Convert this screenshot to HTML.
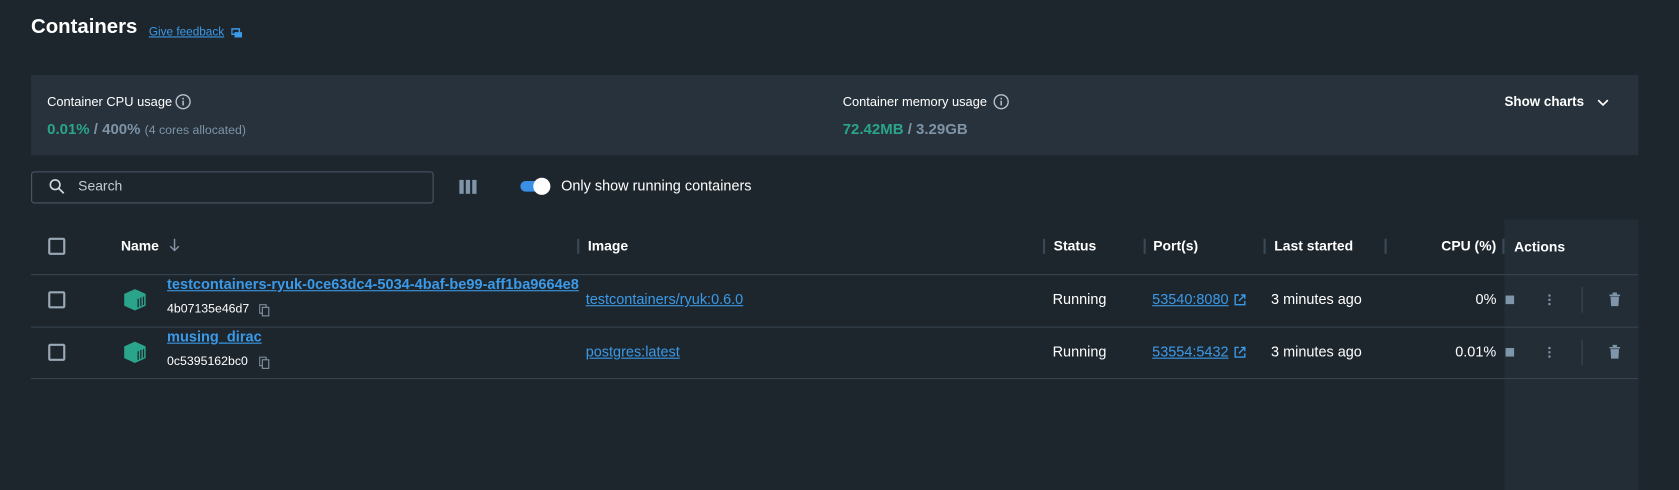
<!DOCTYPE html>
<html><head><style>
*{box-sizing:border-box;margin:0;padding:0}
body{width:1679px;height:458px;background:#1e262d;font-family:"Liberation Sans",Arial,sans-serif;color:#fff;position:relative;overflow:hidden}
#w{position:absolute;left:0;top:0;width:1568px;height:428px;transform:scale(1.0708);transform-origin:0 0}
.a{position:absolute;white-space:nowrap}
.lnk{color:#3b9ae8;text-decoration:underline}
.h{font-weight:bold;font-size:13px;top:222px}
.sep{position:absolute;width:2px;height:14px;background:#3b4956;top:223px}
.cb{position:absolute;width:16px;height:16px;border:2px solid #9aa9b6;border-radius:2px;left:45px}
.line{position:absolute;left:29px;width:1501px;height:1px;background:#37444f}
.t{font-size:13.5px}
</style></head><body><div id="w">
<div class="a" style="left:29px;top:15px;font-size:19px;font-weight:bold">Containers</div>
<div class="a lnk" style="left:139px;top:24px;font-size:11px">Give feedback</div>
<svg class="a" style="left:216px;top:26px" width="11" height="10" viewBox="0 0 11 10"><rect x="0.5" y="1" width="7" height="5" fill="none" stroke="#3b9ae8" stroke-width="1.4"/><rect x="3" y="4" width="7" height="5" fill="#3b9ae8"/></svg>

<div class="a" style="left:29px;top:70px;width:1501px;height:75px;background:#27323c"></div>
<div class="a" style="left:44px;top:88px;font-size:12px">Container CPU usage</div>
<svg class="a" style="left:163px;top:87px" width="16" height="16" viewBox="0 0 16 16"><circle cx="8" cy="8" r="6.5" fill="none" stroke="#b7c2cc" stroke-width="1.3"/><rect x="7.3" y="7" width="1.4" height="4.5" fill="#b7c2cc"/><rect x="7.3" y="4.4" width="1.4" height="1.4" fill="#b7c2cc"/></svg>
<div class="a" style="left:44px;top:112px;font-size:14px;color:#7e93a6;font-weight:bold"><span style="color:#2aa58c">0.01%</span> / 400% <span style="font-size:11.5px;font-weight:normal">(4 cores allocated)</span></div>
<div class="a" style="left:787px;top:88px;font-size:12px">Container memory usage</div>
<svg class="a" style="left:927px;top:87px" width="16" height="16" viewBox="0 0 16 16"><circle cx="8" cy="8" r="6.5" fill="none" stroke="#b7c2cc" stroke-width="1.3"/><rect x="7.3" y="7" width="1.4" height="4.5" fill="#b7c2cc"/><rect x="7.3" y="4.4" width="1.4" height="1.4" fill="#b7c2cc"/></svg>
<div class="a" style="left:787px;top:112px;font-size:14px;color:#7e93a6;font-weight:bold"><span style="color:#2aa58c">72.42MB</span> / 3.29GB</div>
<div class="a" style="left:1405px;top:88px;font-size:12.5px;font-weight:bold">Show charts</div>
<svg class="a" style="left:1491px;top:91px" width="12" height="10" viewBox="0 0 12 10"><path d="M1.5 2.5 6 7 10.5 2.5" fill="none" stroke="#fff" stroke-width="1.6"/></svg>

<div class="a" style="left:29px;top:160px;width:376px;height:30px;border:1px solid #4a5866;border-radius:3px"></div>
<svg class="a" style="left:45px;top:166px" width="16" height="16" viewBox="0 0 16 16"><circle cx="6.5" cy="6.5" r="4.5" fill="none" stroke="#d0d7dd" stroke-width="1.5"/><path d="M10 10 14.5 14.5" stroke="#d0d7dd" stroke-width="1.6"/></svg>
<div class="a" style="left:73px;top:166px;font-size:13px;color:#c4ccd3">Search</div>
<div class="a" style="left:429px;top:168px;width:4px;height:13px;background:#7f95aa"></div>
<div class="a" style="left:435px;top:168px;width:4px;height:13px;background:#7f95aa"></div>
<div class="a" style="left:441px;top:168px;width:4px;height:13px;background:#7f95aa"></div>
<div class="a" style="left:486px;top:169px;width:26px;height:10px;border-radius:5px;background:#3b8ee6"></div>
<div class="a" style="left:498px;top:166px;width:16px;height:16px;border-radius:8px;background:#fff"></div>
<div class="a" style="left:524px;top:166px;font-size:13.5px">Only show running containers</div>

<div class="a" style="left:1405px;top:205px;width:125px;height:253px;background:#232d36"></div>
<div class="cb" style="top:222px"></div>
<div class="a h" style="left:113px">Name</div>
<svg class="a" style="left:157px;top:222px" width="12" height="14" viewBox="0 0 12 14"><path d="M6 1v11M2 8l4 4 4-4" fill="none" stroke="#8596a6" stroke-width="1.3"/></svg>
<div class="sep" style="left:539px"></div><div class="a h" style="left:549px">Image</div>
<div class="sep" style="left:974px"></div><div class="a h" style="left:984px">Status</div>
<div class="sep" style="left:1068px"></div><div class="a h" style="left:1077px">Port(s)</div>
<div class="sep" style="left:1180px"></div><div class="a h" style="left:1190px">Last started</div>
<div class="sep" style="left:1293px"></div><div class="a h" style="left:1346px">CPU (%)</div>
<div class="sep" style="left:1403px"></div><div class="a h" style="left:1414px;top:223px">Actions</div>
<div class="line" style="top:256px"></div>
<div class="line" style="top:305px"></div>
<div class="line" style="top:353px"></div>

<!-- row 1 -->
<div class="cb" style="top:272px"></div>
<svg class="a" style="left:114px;top:269px" width="24" height="22" viewBox="0 0 24 22"><path d="M12 1 22 5.5V16.5L12 21 2 16.5V5.5Z" fill="#2aa58c"/><path d="M15 10v8M17.5 9v8M20 8v8" stroke="#1e262d" stroke-width="1.2"/></svg>
<div class="a lnk" style="left:156px;top:258px;font-size:13.6px;font-weight:bold">testcontainers-ryuk-0ce63dc4-5034-4baf-be99-aff1ba9664e8</div>
<div class="a" style="left:156px;top:283px;font-size:11.5px">4b07135e46d7</div>
<svg class="a" style="left:242px;top:284px" width="10" height="12" viewBox="0 0 10 12"><rect x="0.5" y="0.5" width="6" height="8" fill="none" stroke="#8596a6"/><rect x="3" y="3" width="6" height="8" fill="#1e262d" stroke="#8596a6"/></svg>
<div class="a lnk t" style="left:547px;top:272px">testcontainers/ryuk:0.6.0</div>
<div class="a t" style="left:983px;top:272px">Running</div>
<div class="a lnk t" style="left:1076px;top:272px">53540:8080</div>
<svg class="a" style="left:1152px;top:274px" width="12" height="12" viewBox="0 0 12 12"><path d="M5 1.5H1.5v9h9V7M7 1.5h3.5V5M10.5 1.5 5 7" fill="none" stroke="#3b9ae8" stroke-width="1.3"/></svg>
<div class="a t" style="left:1187px;top:272px">3 minutes ago</div>
<div class="a t" style="left:1378px;top:272px">0%</div>
<div class="a" style="left:1406px;top:276px;width:8px;height:8px;background:#7f95aa"></div>
<div class="a" style="left:1446px;top:275px;width:2px;height:2px;background:#7f95aa;box-shadow:0 4px #7f95aa,0 8px #7f95aa"></div>
<div class="a" style="left:1477px;top:268px;width:1px;height:24px;background:#3b4956"></div>
<svg class="a" style="left:1503px;top:273px" width="10" height="13" viewBox="0 0 10 13"><path d="M0 2h10v1.5H0zM3 0h4v2H3zM1 4h8l-.6 9H1.6z" fill="#7f95aa"/></svg>

<!-- row 2 -->
<div class="cb" style="top:321px"></div>
<svg class="a" style="left:114px;top:318px" width="24" height="22" viewBox="0 0 24 22"><path d="M12 1 22 5.5V16.5L12 21 2 16.5V5.5Z" fill="#2aa58c"/><path d="M15 10v8M17.5 9v8M20 8v8" stroke="#1e262d" stroke-width="1.2"/></svg>
<div class="a lnk" style="left:156px;top:307px;font-size:13.6px;font-weight:bold">musing_dirac</div>
<div class="a" style="left:156px;top:332px;font-size:11.5px">0c5395162bc0</div>
<svg class="a" style="left:242px;top:333px" width="10" height="12" viewBox="0 0 10 12"><rect x="0.5" y="0.5" width="6" height="8" fill="none" stroke="#8596a6"/><rect x="3" y="3" width="6" height="8" fill="#1e262d" stroke="#8596a6"/></svg>
<div class="a lnk t" style="left:547px;top:321px">postgres:latest</div>
<div class="a t" style="left:983px;top:321px">Running</div>
<div class="a lnk t" style="left:1076px;top:321px">53554:5432</div>
<svg class="a" style="left:1152px;top:323px" width="12" height="12" viewBox="0 0 12 12"><path d="M5 1.5H1.5v9h9V7M7 1.5h3.5V5M10.5 1.5 5 7" fill="none" stroke="#3b9ae8" stroke-width="1.3"/></svg>
<div class="a t" style="left:1187px;top:321px">3 minutes ago</div>
<div class="a t" style="left:1359px;top:321px">0.01%</div>
<div class="a" style="left:1406px;top:325px;width:8px;height:8px;background:#7f95aa"></div>
<div class="a" style="left:1446px;top:324px;width:2px;height:2px;background:#7f95aa;box-shadow:0 4px #7f95aa,0 8px #7f95aa"></div>
<div class="a" style="left:1477px;top:317px;width:1px;height:24px;background:#3b4956"></div>
<svg class="a" style="left:1503px;top:322px" width="10" height="13" viewBox="0 0 10 13"><path d="M0 2h10v1.5H0zM3 0h4v2H3zM1 4h8l-.6 9H1.6z" fill="#7f95aa"/></svg>
</div></body></html>
